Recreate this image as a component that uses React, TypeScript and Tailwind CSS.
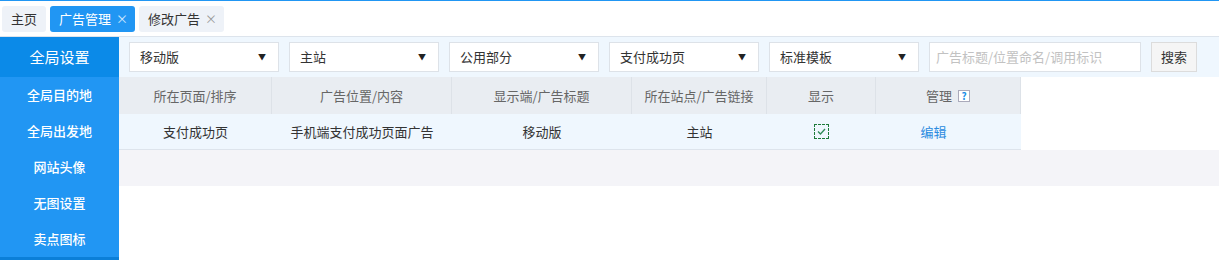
import React from 'react';

const selects = ['移动版', '主站', '公用部分', '支付成功页', '标准模板'];

const sideItems = ['全局目的地', '全局出发地', '网站头像', '无图设置', '卖点图标'];

const columns = [
  { title: '所在页面/排序', w: 'w-[153px]' },
  { title: '广告位置/内容', w: 'w-[180px]' },
  { title: '显示端/广告标题', w: 'w-[180px]' },
  { title: '所在站点/广告链接', w: 'w-[135px]' },
  { title: '显示', w: 'w-[109px]' },
  { title: '管理', w: 'w-[145px]' },
];

const row = ['支付成功页', '手机端支付成功页面广告', '移动版', '主站'];

function Tab({ label, active, closable }: { label: string; active?: boolean; closable?: boolean }) {
  return (
    <div
      className={`flex h-[26px] items-center rounded-[3px] px-[9px] text-[13px] ${
        closable ? 'pr-[7px]' : ''
      } ${active ? 'bg-[#2196f3] text-white' : 'bg-[#eef2f8] text-[#333]'}`}
    >
      <span>{label}</span>
      {closable && (
        <span className={`ml-[5px] text-[12px] leading-none ${active ? 'text-white/80' : 'text-[#999]'}`}>×</span>
      )}
    </div>
  );
}

export default function App() {
  return (
    <div className="h-[260px] w-[1219px] overflow-hidden bg-white font-['Noto_Sans_CJK_SC','Noto_Sans',sans-serif] text-[13px] text-[#333]">
      <div className="h-px bg-[#2196f3]" />

      {/* tab bar */}
      <div className="flex h-[36px] items-center gap-[4px] border-b border-[#dde4ec] px-[2px]">
        <Tab label="主页" />
        <Tab label="广告管理" active closable />
        <Tab label="修改广告" closable />
      </div>

      <div className="flex">
        {/* sidebar */}
        <div className="w-[119px] shrink-0 bg-[#2196f3] text-white">
          <div className="flex h-[40px] items-center justify-center bg-[#0b8ae8] text-[15px]">全局设置</div>
          {sideItems.map((item) => (
            <div key={item} className="flex h-[36px] items-center justify-center text-[13px] font-medium">
              {item}
            </div>
          ))}
          <div className="h-[4px] bg-[#0b7fd8]" />
        </div>

        {/* main */}
        <div className="flex-1">
          <div className="flex h-[40px] items-center gap-[10px] bg-[#eff7fe] pl-[10px]">
            {selects.map((s) => (
              <div
                key={s}
                className="flex h-[30px] w-[150px] items-center justify-between border border-[#dde2e8] bg-white pl-[10px] pr-[12px]"
              >
                <span>{s}</span>
                <span className="text-[8px] text-[#222]">▼</span>
              </div>
            ))}
            <div className="flex h-[30px] w-[212px] items-center border border-[#dde2e8] bg-white px-[6px] text-[#c2c2c2]">
              广告标题/位置命名/调用标识
            </div>
            <div className="flex h-[30px] w-[46px] items-center justify-center border border-[#dcdcdc] bg-[#f5f5f5] text-[#333]">
              搜索
            </div>
          </div>

          <div className="flex">
            {columns.map((c) => (
              <div
                key={c.title}
                className={`${c.w} flex h-[37px] items-center justify-center border-r border-[#dde2e8] bg-[#e9edf2] text-[#666]`}
              >
                {c.title}
                {c.title === '管理' && (
                  <span className="ml-[6px] flex h-[12px] w-[12px] items-center justify-center border border-[#aab] bg-white text-[10px] font-bold leading-none text-[#1a8ee6]">
                    ?
                  </span>
                )}
              </div>
            ))}
          </div>
          <div className="flex">
            <div className="flex h-[36px] w-[902px] border-b border-[#dde4ec] bg-[#eff7fe]">
              {row.map((v, i) => (
                <div key={v} className={`${columns[i].w} flex items-center justify-center`}>
                  {v}
                </div>
              ))}
              <div className="flex w-[109px] items-center justify-center">
                <span className="flex h-[15px] w-[15px] items-center justify-center border border-dashed border-[#1d7a3a]">
                  <svg width="9" height="7" viewBox="0 0 9 7" fill="none">
                    <path d="M1 3.5L3.5 6L8 1" stroke="#2e8b57" strokeWidth="1.3" />
                  </svg>
                </span>
              </div>
              <div className="flex w-[145px] items-center justify-center pr-[30px] text-[#2a8be0]">编辑</div>
            </div>
          </div>
          <div className="h-[36px] bg-[#f4f4f8]" />
        </div>
      </div>
    </div>
  );
}
